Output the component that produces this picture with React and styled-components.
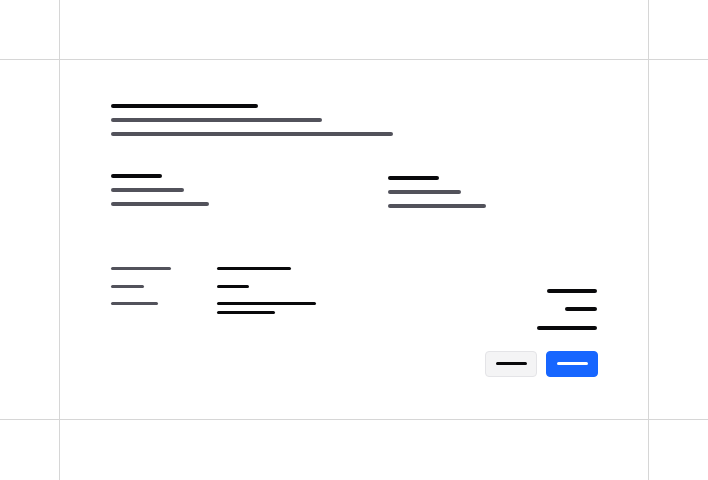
import React from 'react'
import styled, { createGlobalStyle } from 'styled-components'

const GlobalStyle = createGlobalStyle`
  html, body {
    margin: 0;
    padding: 0;
    background: #ffffff;
    font-family: Inter, "Liberation Sans", sans-serif;
  }
`

const Page = styled.div`
  display: flex;
  flex-direction: column;
  height: 480px;
  overflow: hidden;
`

const Band = styled.div`
  flex: ${(p) => (p.$main ? '0 0 361px' : p.$top ? '0 0 59px' : '1 1 0')};
  box-sizing: border-box;
  border-top: ${(p) => (p.$main ? '1px solid #d6d6d6' : 'none')};
  border-bottom: ${(p) => (p.$main ? '1px solid #d6d6d6' : 'none')};
`

const Rail = styled.div`
  width: 590px;
  height: 100%;
  margin: 0 auto;
  box-sizing: border-box;
  border-left: 1px solid #d6d6d6;
  border-right: 1px solid #d6d6d6;
`

const Sheet = styled(Rail)`
  padding: 44px 50px 0 51px;
  display: flex;
  flex-direction: column;
`

const Bar = styled.span`
  display: block;
  width: ${(p) => p.$w}px;
  height: ${(p) => p.$h || 4}px;
  border-radius: 2px;
  background: ${(p) => (p.$tone === 'muted' ? '#52525b' : p.$tone === 'light' ? '#ffffff' : '#09090b')};
`

const Stack = styled.div`
  display: flex;
  flex-direction: column;
  align-items: ${(p) => (p.$end ? 'flex-end' : 'flex-start')};
  gap: ${(p) => p.$gap || 10}px;
  margin-top: ${(p) => p.$top || 0}px;
  margin-right: ${(p) => p.$right || 0}px;
`

const Parties = styled.div`
  display: grid;
  grid-template-columns: 277px 1fr;
  margin-top: 38px;
`

const Summary = styled.div`
  display: flex;
  justify-content: space-between;
  align-items: flex-start;
  margin-top: 59px;
`

const Details = styled.div`
  display: grid;
  grid-template-columns: 106px auto;
  row-gap: 14.5px;
`

const Actions = styled.div`
  display: flex;
  justify-content: flex-end;
  gap: 9px;
  margin-top: 21px;
`

const Button = styled.button`
  width: 52px;
  height: 26px;
  box-sizing: border-box;
  display: flex;
  align-items: center;
  justify-content: center;
  padding: 0;
  border-radius: 4px;
  border: 1px solid ${(p) => (p.$primary ? '#1766ff' : '#e4e4e7')};
  background: ${(p) => (p.$primary ? '#1766ff' : '#f4f4f5')};
  cursor: pointer;
`

const details = [
  { label: 60, values: [74] },
  { label: 33, values: [32] },
  { label: 47, values: [99, 58] },
]

export default function App() {
  return (
    <>
      <GlobalStyle />
      <Page>
        <Band $top>
          <Rail />
        </Band>
        <Band $main>
          <Sheet>
            <Stack>
              <Bar $w={147} />
              <Bar $w={211} $tone="muted" />
              <Bar $w={282} $tone="muted" />
            </Stack>

            <Parties>
              <Stack>
                <Bar $w={51} />
                <Bar $w={73} $tone="muted" />
                <Bar $w={98} $tone="muted" />
              </Stack>
              <Stack $top={2}>
                <Bar $w={51} />
                <Bar $w={73} $tone="muted" />
                <Bar $w={98} $tone="muted" />
              </Stack>
            </Parties>

            <Summary>
              <Details>
                {details.map((d, i) => (
                  <React.Fragment key={i}>
                    <Bar $w={d.label} $h={3} $tone="muted" />
                    <Stack $gap={6}>
                      {d.values.map((v, j) => (
                        <Bar key={j} $w={v} $h={3} />
                      ))}
                    </Stack>
                  </React.Fragment>
                ))}
              </Details>
              <Stack $end $gap={14.5} $top={21.5} $right={1}>
                <Bar $w={50} />
                <Bar $w={32} />
                <Bar $w={60} />
              </Stack>
            </Summary>

            <Actions>
              <Button>
                <Bar $w={31} $h={3} />
              </Button>
              <Button $primary>
                <Bar $w={31} $h={3} $tone="light" />
              </Button>
            </Actions>
          </Sheet>
        </Band>
        <Band>
          <Rail />
        </Band>
      </Page>
    </>
  )
}
